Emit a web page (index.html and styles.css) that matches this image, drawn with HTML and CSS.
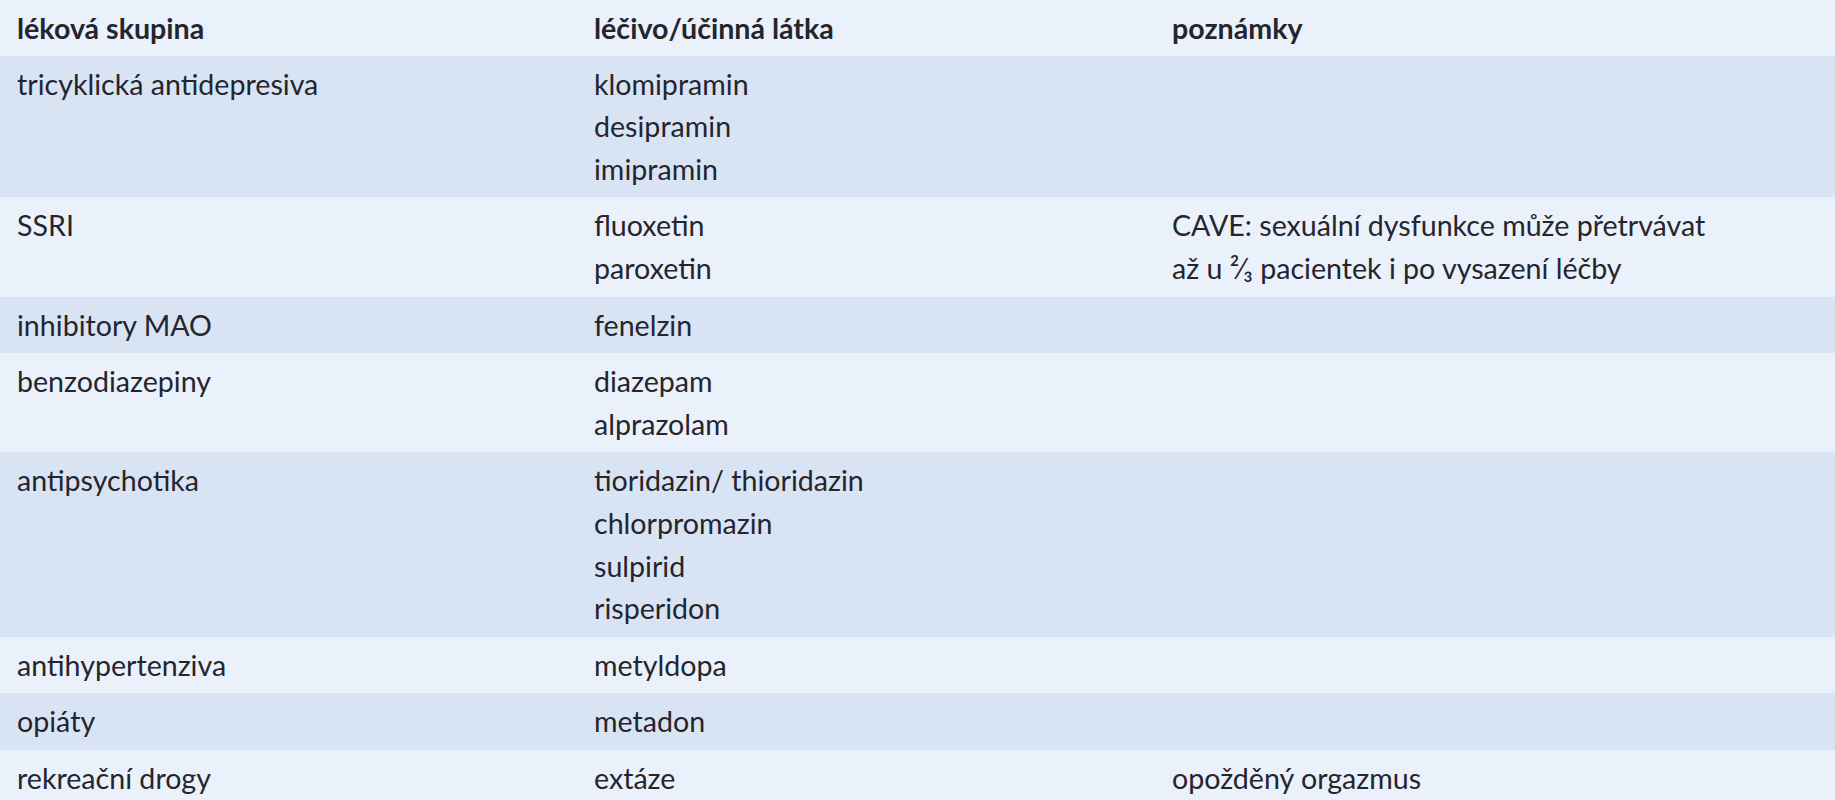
FILE: index.html
```html
<!DOCTYPE html>
<html lang="cs">
<head>
<meta charset="utf-8">
<title>Léky a sexuální dysfunkce</title>
<link rel="stylesheet" href="styles.css">
</head>
<body>
<table class="drug-table">
  <colgroup>
    <col class="col-group">
    <col class="col-drug">
    <col class="col-note">
  </colgroup>
  <thead>
    <tr class="row-light">
      <th>léková skupina</th>
      <th>léčivo/účinná látka</th>
      <th>poznámky</th>
    </tr>
  </thead>
  <tbody>
    <tr class="row-dark">
      <td>tricyklická antidepresiva</td>
      <td>klomipramin<br>desipramin<br>imipramin</td>
      <td></td>
    </tr>
    <tr class="row-light">
      <td>SSRI</td>
      <td>fluoxetin<br>paroxetin</td>
      <td>CAVE: sexuální dysfunkce může přetrvávat<br>až u <span class="frac">²⁄₃</span> pacientek i po vysazení léčby</td>
    </tr>
    <tr class="row-dark">
      <td>inhibitory MAO</td>
      <td>fenelzin</td>
      <td></td>
    </tr>
    <tr class="row-light">
      <td>benzodiazepiny</td>
      <td>diazepam<br>alprazolam</td>
      <td></td>
    </tr>
    <tr class="row-dark">
      <td>antipsychotika</td>
      <td>tioridazin/ thioridazin<br>chlorpromazin<br>sulpirid<br>risperidon</td>
      <td></td>
    </tr>
    <tr class="row-light">
      <td>antihypertenziva</td>
      <td>metyldopa</td>
      <td></td>
    </tr>
    <tr class="row-dark">
      <td>opiáty</td>
      <td>metadon</td>
      <td></td>
    </tr>
    <tr class="row-light">
      <td>rekreační drogy</td>
      <td>extáze</td>
      <td>opožděný orgazmus</td>
    </tr>
  </tbody>
</table>
</body>
</html>
```

FILE: styles.css
```css
html, body {
  margin: 0;
  padding: 0;
  background: #eaf1fa;
}

.drug-table {
  width: 100%;
  border-collapse: collapse;
  border-spacing: 0;
  table-layout: fixed;
  font-family: "Lato", "Liberation Sans", sans-serif;
  font-size: 28.6px;
  line-height: 42.6px;
  color: #25252d;
}

.col-group { width: 577px; }
.col-drug { width: 578px; }
.col-note { width: auto; }

.drug-table th,
.drug-table td {
  text-align: left;
  vertical-align: top;
  padding: 7px 10px 7px 17px;
}

.drug-table th {
  font-weight: 700;
  padding-bottom: 6px;
}

.drug-table td {
  font-weight: 400;
}

.row-light { background: #eaf1fa; }
.row-dark { background: #d8e4f4; }

.frac {
  font-size: 1em;
}
```
